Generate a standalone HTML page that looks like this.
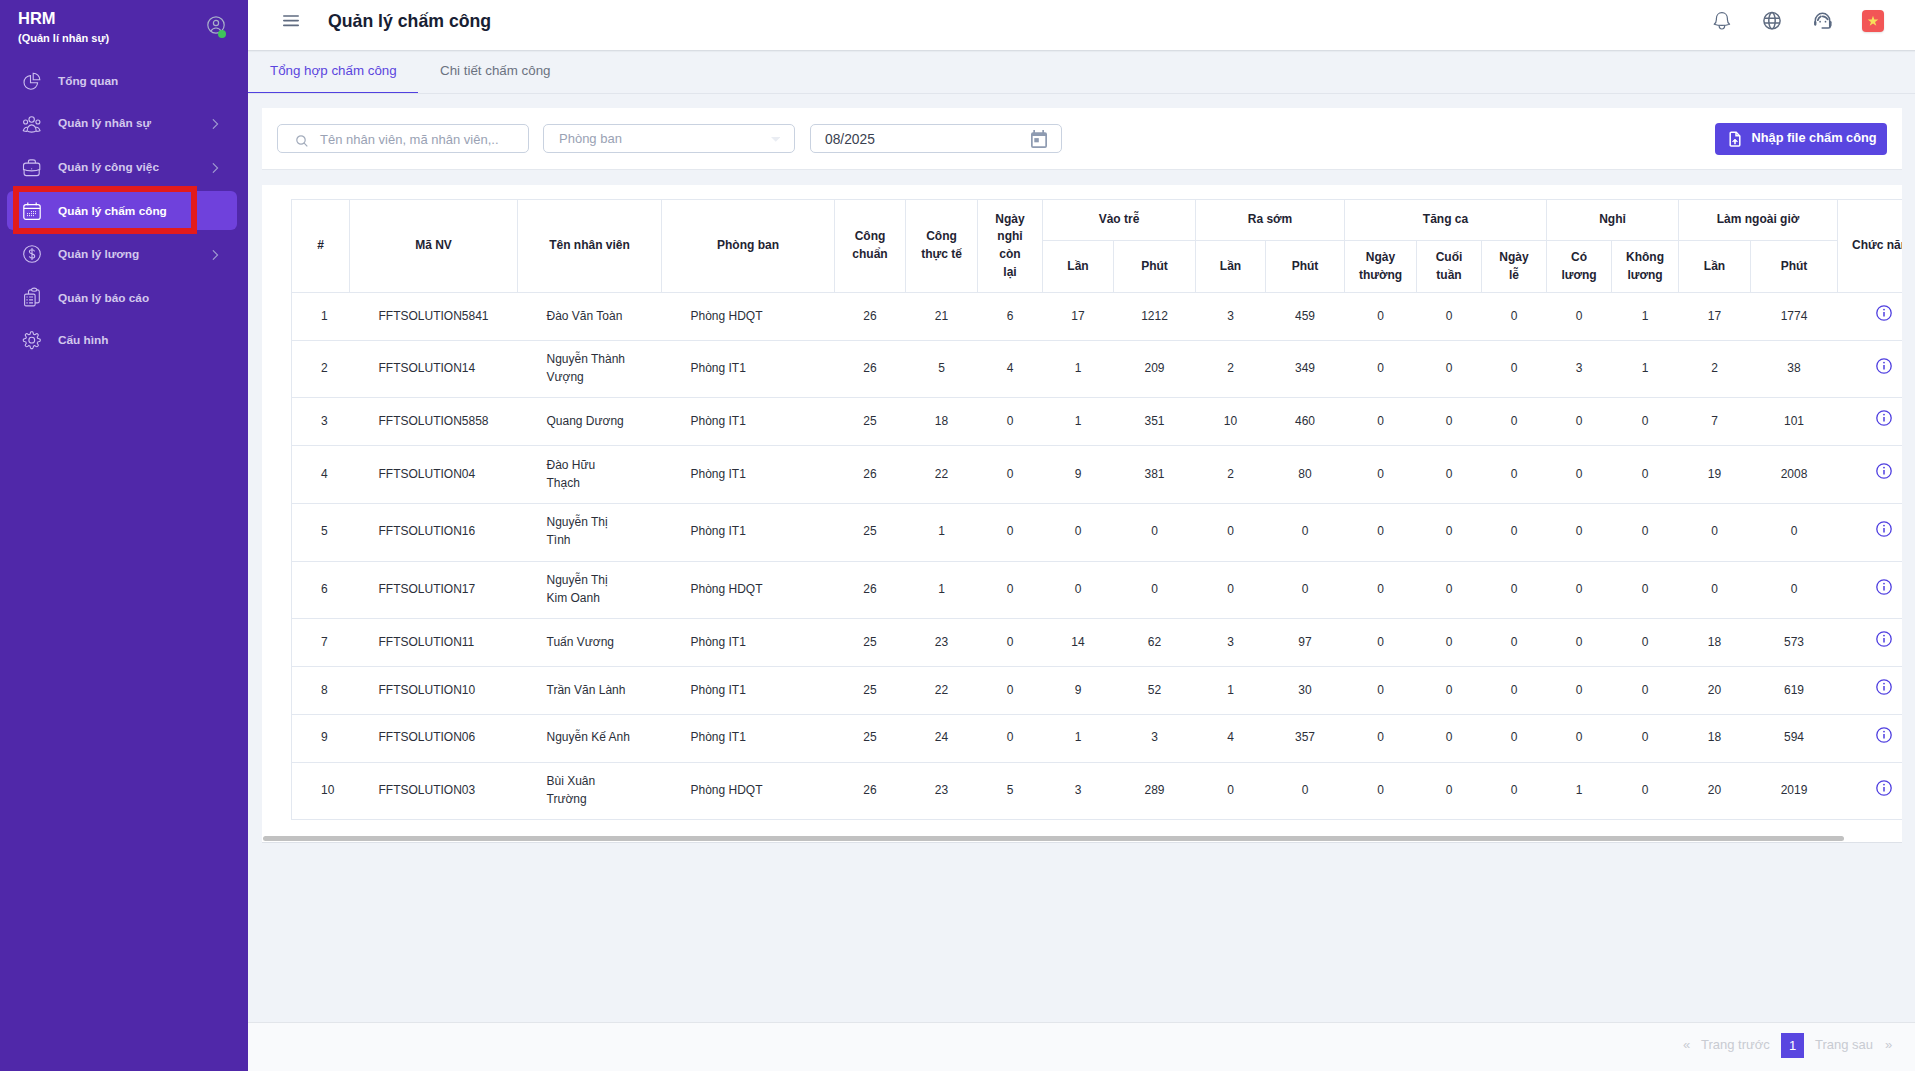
<!DOCTYPE html>
<html lang="vi">
<head>
<meta charset="utf-8">
<title>Quản lý chấm công</title>
<style>
*{box-sizing:border-box;margin:0;padding:0}
html,body{width:1915px;height:1071px;overflow:hidden}
body{font-family:"Liberation Sans",sans-serif;background:#f0f3f8;color:#1f2937;position:relative}
.abs{position:absolute}
/* sidebar */
#sb{position:absolute;left:0;top:0;width:248px;height:1071px;background:#5028a9}
#sb .brand{position:absolute;left:18px;top:9px;color:#fff;font-weight:bold;font-size:16.5px;line-height:18px}
#sb .brand2{position:absolute;left:18px;top:31px;color:#fff;font-weight:bold;font-size:11px;line-height:14px}
#sb .avatar{position:absolute;left:206.8px;top:15.8px;width:18px;height:18px}
#sb .dot{position:absolute;left:218px;top:30px;width:8px;height:8px;border-radius:50%;background:#3fc35a}
.item{position:absolute;left:7px;width:230px;height:39px;border-radius:6px}
.item.active{background:#6f41dc}
.item .ic{position:absolute;left:16px;top:10.5px;width:18px;height:18px}
.item .tx{position:absolute;left:51px;top:1px;line-height:39px;font-size:11.8px;font-weight:bold;color:#d3c8ed;white-space:nowrap}
.item.active .tx{color:#fff}
.item .chev{position:absolute;left:204px;top:16px;width:8px;height:10px}
#redbox{position:absolute;left:13px;top:186px;width:184px;height:48px;border:6px solid #e31b1b}
/* header */
#hdr{position:absolute;left:248px;top:0;width:1667px;height:51px;background:#fff;border-bottom:1px solid #d9dde3;box-shadow:0 1px 1px rgba(30,40,60,.04)}
#hdr .title{position:absolute;left:80px;top:9px;font-size:17.7px;font-weight:bold;color:#172033;line-height:24px;white-space:nowrap}
/* tabs */
.tab{position:absolute;top:61px;font-size:13.35px;line-height:20px;white-space:nowrap}
#tabline{position:absolute;left:248px;top:93px;width:1667px;height:1px;background:#e1e5ec}
#tabact{position:absolute;left:248px;top:92px;width:170px;height:1px;background:#5040e0}
/* filter card */
#fcard{position:absolute;left:262px;top:108px;width:1640px;height:62px;background:#fff;border-bottom:1px solid #e4e8ee}
.inp{position:absolute;top:124px;height:29px;border:1px solid #c9d2e0;border-radius:5px;background:#fff}
.ph{position:absolute;font-size:13px;line-height:16px;color:#9aa2b4;white-space:nowrap}
#btn{position:absolute;left:1715px;top:123px;width:172px;height:32px;background:#5946e0;border-radius:4px}
#btn .tx{position:absolute;left:36.5px;top:6px;color:#fff;font-weight:bold;font-size:12.8px;line-height:18px;white-space:nowrap}
/* table card */
#tcard{position:absolute;left:262px;top:185px;width:1640px;height:658px;background:#fff;overflow:hidden;border-bottom:1px solid #dde1e8}
#scroll{position:absolute;left:1px;top:651px;width:1581px;height:5px;border-radius:2.5px;background:#c1c1c1}
table{position:absolute;left:29px;top:14px;border-collapse:collapse;table-layout:fixed;width:1642px}
th,td{border:1px solid #e3e8f0;padding:0}
th{font-weight:bold;font-size:12px;line-height:17.6px;color:#1f2433;text-align:center;padding-bottom:0}
td{font-size:12px;line-height:18px;color:#2b2f3a;text-align:center;padding-bottom:2px}
td{border-left:none;border-right:none}
tr.up td{padding-bottom:4px}
tr.up td:last-child{padding-bottom:2px}
td:first-child{border-left:1px solid #e3e8f0}
td.l{text-align:left;padding-left:29px}
.info{display:inline-block;width:16px;height:16px;vertical-align:middle;position:relative;top:-3px;left:38px}
/* footer */
#foot{position:absolute;left:248px;top:1022px;width:1667px;height:49px;background:#f9fafc;border-top:1px solid #e2e5ea}
.pg{position:absolute;top:1036px;font-size:13px;line-height:18px;color:#c8cbd2;white-space:nowrap}
#pg1{position:absolute;left:1781px;top:1033px;width:23px;height:25px;background:#5946e0;color:#fff;font-size:13px;line-height:25px;text-align:center}
</style>
</head>
<body>

<div id="sb">
  <div class="brand">HRM</div>
  <div class="brand2">(Quản lí nhân sự)</div>
  <svg class="avatar" viewBox="0 0 18 18" fill="none" stroke="#a9b0ca" stroke-width="1.2"><circle cx="9" cy="9" r="8.2"/><circle cx="9" cy="7" r="2.6"/><path d="M3.8 15.2c1.2-2.2 3-3.2 5.2-3.2s4 1 5.2 3.2"/></svg>
  <div class="dot"></div>

  <div class="item" style="top:61px">
    <svg class="ic" viewBox="0 0 18 18" fill="none" stroke="#cdbff0" stroke-width="1.1"><path d="M7.5 3.6A6.8 6.8 0 1 0 14.6 10.7H7.5Z"/><path d="M10.2 1.2v6.6h6.6a6.6 6.6 0 0 0-6.6-6.6Z"/></svg>
    <div class="tx">Tổng quan</div>
  </div>
  <div class="item" style="top:103px">
    <svg class="ic" viewBox="0 0 18 18" fill="none" stroke="#cdbff0" stroke-width="1.1" style="overflow:visible"><circle cx="8.66" cy="5.5" r="2.7"/><circle cx="2.6" cy="8.05" r="2"/><circle cx="14.9" cy="8.05" r="2"/><path d="M4.1 16.9C4.1 13.5 6.1 10.9 8.66 10.9C11.2 10.9 13.2 13.5 13.2 16.9C11.4 18.5 5.9 18.5 4.1 16.9Z"/><path d="M4.7 13.3C2.7 13 0.9 14.7 0.3 16.7C1.5 17.3 2.8 17.4 4.1 17.4"/><path d="M12.6 13.3C14.6 13 16.4 14.7 17 16.7C15.8 17.3 14.5 17.4 13.2 17.4"/></svg>
    <div class="tx">Quản lý nhân sự</div>
    <svg class="chev" viewBox="0 0 8 10" fill="none" stroke="#a09cd0" stroke-width="1.1"><path d="M1.9 0.3L6.6 5L1.9 9.7"/></svg>
  </div>
  <div class="item" style="top:147px">
    <svg class="ic" viewBox="0 0 18 18" fill="none" stroke="#cdbff0" stroke-width="1.1" style="overflow:visible"><path d="M2.8 5.1H14.5C15.9 5.1 16.8 6 16.8 7.4V11.5L16.2 12.5V15.6C16.2 16.9 15.3 17.6 14 17.6H3.3C2 17.6 1.1 16.9 1.1 15.6V12.5L0.5 11.5V7.4C0.5 6 1.4 5.1 2.8 5.1Z"/><path d="M0.8 11.6C4 13.3 13.3 13.3 16.5 11.6"/><path d="M5.4 5V3.8C5.4 2.6 6.2 1.9 7.4 1.9H10C11.2 1.9 12.4 2.6 12.4 3.8V5"/><circle cx="8.66" cy="10.8" r=".6" fill="#cdbff0" stroke="none"/></svg>
    <div class="tx">Quản lý công việc</div>
    <svg class="chev" viewBox="0 0 8 10" fill="none" stroke="#a09cd0" stroke-width="1.1"><path d="M1.9 0.3L6.6 5L1.9 9.7"/></svg>
  </div>
  <div class="item active" style="top:191px">
    <svg class="ic" viewBox="0 0 18 18" fill="none" stroke="#fff" stroke-width="1.2"><path d="M4.8 0.6v2.6M13.2 0.6v2.6"/><rect x="0.8" y="2.6" width="16.4" height="14.8" rx="2.2"/><path d="M0.8 6.4h16.4"/><g fill="#fff" stroke="none"><circle cx="8.5" cy="9.6" r=".55"/><circle cx="10.5" cy="9.6" r=".55"/><circle cx="12.5" cy="9.6" r=".55"/><circle cx="4.5" cy="11.6" r=".55"/><circle cx="6.5" cy="11.6" r=".55"/><circle cx="8.5" cy="11.6" r=".55"/><circle cx="10.5" cy="11.6" r=".55"/><circle cx="12.5" cy="11.6" r=".55"/><circle cx="4.5" cy="13.6" r=".55"/><circle cx="6.5" cy="13.6" r=".55"/><circle cx="8.5" cy="13.6" r=".55"/><circle cx="10.5" cy="13.6" r=".55"/></g></svg>
    <div class="tx">Quản lý chấm công</div>
  </div>
  <div class="item" style="top:234px">
    <svg class="ic" viewBox="0 0 18 18" fill="none" stroke="#cdbff0" stroke-width="1.1"><circle cx="9" cy="9" r="8.3"/><path d="M11.6 6.4c-.4-1-1.4-1.6-2.6-1.6-1.5 0-2.6.8-2.6 2s1.1 1.7 2.6 2.1 2.7.9 2.7 2.1-1.2 2.1-2.7 2.1c-1.3 0-2.3-.6-2.7-1.7M9 3v12"/></svg>
    <div class="tx">Quản lý lương</div>
    <svg class="chev" viewBox="0 0 8 10" fill="none" stroke="#a09cd0" stroke-width="1.1"><path d="M1.9 0.3L6.6 5L1.9 9.7"/></svg>
  </div>
  <div class="item" style="top:278px">
    <svg class="ic" viewBox="0 0 18 18" fill="none" stroke="#cdbff0" stroke-width="1.1" style="overflow:visible"><rect x="1.6" y="5.1" width="10.5" height="11.8" rx="1.4"/><path d="M5.5 5.1V2.6C5.5 1.5 6.1 0.9 7.3 0.9H8.4M13.9 0.9H14.4C15.6 0.9 16.3 1.6 16.3 2.8V12.2C16.3 13.2 15.5 13.9 14.5 13.9H12.1"/><path d="M8.4 0.8C8.6 -0.3 9.7 -0.9 11.15 -0.9C12.6 -0.9 13.7 -0.3 13.9 0.8C13.7 1.8 12.6 2.3 11.15 2.3C9.7 2.3 8.6 1.8 8.4 0.8Z"/><path d="M3.4 8H4.7M6.1 8H10M3.4 10.9H4.7M6.1 10.9H10M3.4 13.8H4.7M6.1 13.8H10" stroke-width="1.2"/></svg>
    <div class="tx">Quản lý báo cáo</div>
  </div>
  <div class="item" style="top:320px">
    <svg class="ic" viewBox="0 0 18 18" fill="none" stroke="#cdbff0" stroke-width="1.1" style="overflow:visible"><circle cx="8.77" cy="9.17" r="2.9"/><path d="M17.22 9.17 L17.21 9.50 L17.19 9.83 L17.03 10.15 L16.51 10.40 L15.93 10.59 L15.35 10.75 L14.82 10.88 L14.62 11.07 L14.54 11.30 L14.45 11.52 L14.36 11.74 L14.25 11.96 L14.25 12.24 L14.54 12.71 L14.84 13.23 L15.11 13.77 L15.30 14.32 L15.20 14.66 L14.98 14.91 L14.75 15.15 L14.51 15.38 L14.26 15.60 L13.92 15.70 L13.37 15.51 L12.83 15.24 L12.31 14.94 L11.84 14.65 L11.56 14.65 L11.34 14.76 L11.12 14.85 L10.90 14.94 L10.67 15.02 L10.48 15.22 L10.35 15.75 L10.19 16.33 L10.00 16.91 L9.75 17.43 L9.43 17.59 L9.10 17.61 L8.77 17.62 L8.44 17.61 L8.11 17.59 L7.79 17.43 L7.54 16.91 L7.35 16.33 L7.19 15.75 L7.06 15.22 L6.87 15.02 L6.64 14.94 L6.42 14.85 L6.20 14.76 L5.98 14.65 L5.70 14.65 L5.23 14.94 L4.71 15.24 L4.17 15.51 L3.62 15.70 L3.28 15.60 L3.03 15.38 L2.79 15.15 L2.56 14.91 L2.34 14.66 L2.24 14.32 L2.43 13.77 L2.70 13.23 L3.00 12.71 L3.29 12.24 L3.29 11.96 L3.18 11.74 L3.09 11.52 L3.00 11.30 L2.92 11.07 L2.72 10.88 L2.19 10.75 L1.61 10.59 L1.03 10.40 L0.51 10.15 L0.35 9.83 L0.33 9.50 L0.32 9.17 L0.33 8.84 L0.35 8.51 L0.51 8.19 L1.03 7.94 L1.61 7.75 L2.19 7.59 L2.72 7.46 L2.92 7.27 L3.00 7.04 L3.09 6.82 L3.18 6.60 L3.29 6.38 L3.29 6.10 L3.00 5.63 L2.70 5.11 L2.43 4.57 L2.24 4.02 L2.34 3.68 L2.56 3.43 L2.79 3.19 L3.03 2.96 L3.28 2.74 L3.62 2.64 L4.17 2.83 L4.71 3.10 L5.23 3.40 L5.70 3.69 L5.98 3.69 L6.20 3.58 L6.42 3.49 L6.64 3.40 L6.87 3.32 L7.06 3.12 L7.19 2.59 L7.35 2.01 L7.54 1.43 L7.79 0.91 L8.11 0.75 L8.44 0.73 L8.77 0.72 L9.10 0.73 L9.43 0.75 L9.75 0.91 L10.00 1.43 L10.19 2.01 L10.35 2.59 L10.48 3.12 L10.67 3.32 L10.90 3.40 L11.12 3.49 L11.34 3.58 L11.56 3.69 L11.84 3.69 L12.31 3.40 L12.83 3.10 L13.37 2.83 L13.92 2.64 L14.26 2.74 L14.51 2.96 L14.75 3.19 L14.98 3.43 L15.20 3.68 L15.30 4.02 L15.11 4.57 L14.84 5.11 L14.54 5.63 L14.25 6.10 L14.25 6.38 L14.36 6.60 L14.45 6.82 L14.54 7.04 L14.62 7.27 L14.82 7.46 L15.35 7.59 L15.93 7.75 L16.51 7.94 L17.03 8.19 L17.19 8.51 L17.21 8.84Z"/></svg>
    <div class="tx">Cấu hình</div>
  </div>
  <div id="redbox"></div>
</div>

<div id="hdr">
  <svg class="abs" style="left:35px;top:14px" width="16" height="13" viewBox="0 0 16 13" fill="none" stroke="#5f6b80" stroke-width="1.6" stroke-linecap="round"><path d="M0.8 2h14.4M0.8 6.6h14.4M0.8 11.4h14.4"/></svg>
  <div class="title">Quản lý chấm công</div>
  <!-- bell -->
  <svg class="abs" style="left:1465px;top:11.8px;overflow:visible" width="18" height="20" viewBox="0 0 18 20" fill="none" stroke="#5b6a82" stroke-width="1.2" stroke-linejoin="round"><path d="M1.2 12.2C2.6 11.2 3.4 9.6 3.4 7.5V6.5C3.4 3.1 5.7 0.7 8.9 0.7C12.1 0.7 14.4 3.1 14.4 6.5V7.5C14.4 9.6 15.2 11.2 16.6 12.2C14.5 12.9 12 13.4 8.9 13.4C5.8 13.4 3.3 12.9 1.2 12.2Z"/><path d="M6.1 13.3C6.1 15.8 7.3 17 8.9 17C10.5 17 11.7 15.8 11.7 13.3"/></svg>
  <!-- globe -->
  <svg class="abs" style="left:1514px;top:11px;overflow:visible" width="20" height="20" viewBox="0 0 20 20" fill="none" stroke="#5e6b80" stroke-width="1.5"><circle cx="10" cy="9.7" r="8.1"/><ellipse cx="10" cy="9.7" rx="3.2" ry="8.1"/><path d="M2 7.3H18M2 11.9H18"/></svg>
  <!-- headset -->
  <svg class="abs" style="left:1565px;top:12px;overflow:visible" width="20" height="20" viewBox="0 0 20 20" fill="none" stroke="#5b6a82" stroke-width="1.5" stroke-linecap="round"><path d="M2.3 12.5V8.5A7.2 7.2 0 0 1 16.7 8.5V14.6"/><rect x="1.1" y="9.1" width="2.3" height="4.6" rx="1.1" fill="#5b6a82" stroke="none"/><rect x="16.3" y="9.1" width="2.3" height="5.3" rx="1.1" fill="#5b6a82" stroke="none"/><path d="M17.4 14.4C17.2 15.5 16.5 16 15.4 16H9.2" stroke-width="1.6"/><path d="M4.8 8.2C5.3 6.4 6.4 5 7.9 4.4" stroke-width="1.8"/><path d="M9.7 4.3C11.7 4.4 13.5 5.5 14.6 7.4" stroke-width="1.8"/><circle cx="7.1" cy="9.7" r=".85" fill="#5b6a82" stroke="none"/><circle cx="12.5" cy="9.7" r=".85" fill="#5b6a82" stroke="none"/></svg>
  <!-- flag -->
  <div class="abs" style="left:1614px;top:10px;width:22px;height:22px;border-radius:4px;background:#f25656;box-shadow:0 1px 2px rgba(0,0,0,.12)"></div>
  <svg class="abs" style="left:1618px;top:14px" width="14" height="14" viewBox="0 0 14 14"><path fill="#f6e05a" d="M7 1.8L8.3 5.6H12.3L9.05 7.95L10.3 11.8L7 9.45L3.7 11.8L4.95 7.95L1.7 5.6H5.7Z"/></svg>
</div>

<div class="tab" style="left:270px;color:#5b45de">Tổng hợp chấm công</div>
<div class="tab" style="left:440px;color:#6b7280">Chi tiết chấm công</div>
<div id="tabline"></div>
<div id="tabact"></div>

<div id="fcard"></div>
<div class="inp" style="left:277px;width:252px"></div>
<svg class="abs" style="left:295.5px;top:134.5px" width="12" height="12" viewBox="0 0 12 12" fill="none" stroke="#a2abbb" stroke-width="1.2"><circle cx="5" cy="5" r="4.2"/><path d="M8.2 8.2L11.3 11.3"/></svg>
<div class="ph" style="left:320px;top:131.6px">Tên nhân viên, mã nhân viên,..</div>
<div class="inp" style="left:543px;width:252px"></div>
<div class="ph" style="left:559px;top:131px">Phòng ban</div>
<svg class="abs" style="left:770.5px;top:137px" width="9.5" height="5" viewBox="0 0 9.5 5"><path d="M0 0h9.5L4.75 4.8Z" fill="#eaedf3"/></svg>
<div class="inp" style="left:810px;width:252px"></div>
<div class="ph" style="left:825px;top:132px;color:#3a4150;font-size:13.8px">08/2025</div>
<svg class="abs" style="left:1031px;top:130px" width="16" height="18" viewBox="0 0 16 18"><path fill="#8e9bb1" fill-rule="evenodd" d="M2.3 0H4V2.2H11.3V0H13V2.2H14A2 2 0 0 1 16 4.2V16A2 2 0 0 1 14 18H2A2 2 0 0 1 0 16V4.2A2 2 0 0 1 2 2.2H2.3Z M1.7 5.9V16.2H14.3V5.9Z"/><rect x="3.3" y="8.1" width="4.5" height="4.2" fill="#8e9bb1"/></svg>

<div id="btn">
  <svg class="abs" style="left:14px;top:8px" width="12" height="16" viewBox="0 0 12 16" fill="none" stroke="#fff" stroke-width="1.5"><path d="M1.2 2.2c0-.6.4-1 1-1h5l3.6 3.8v9c0 .6-.4 1-1 1H2.2c-.6 0-1-.4-1-1Z"/><path d="M7 1.4v3.4h3.6" /><path d="M6 13.2V9.4" stroke-width="1.6"/><path d="M3.4 10.6L6 8l2.6 2.6Z" fill="#fff" stroke-width=".6"/></svg>
  <div class="tx">Nhập file chấm công</div>
</div>

<div id="tcard">
  <table id="tbl">
    <colgroup>
      <col style="width:58px"><col style="width:168px"><col style="width:144px"><col style="width:173px">
      <col style="width:71px"><col style="width:72px"><col style="width:65px">
      <col style="width:71px"><col style="width:82px"><col style="width:70px"><col style="width:79px">
      <col style="width:72px"><col style="width:65px"><col style="width:65px">
      <col style="width:65px"><col style="width:67px">
      <col style="width:72px"><col style="width:87px">
      <col style="width:96px">
    </colgroup>
    <thead>
      <tr style="height:41px">
        <th rowspan="2">#</th><th rowspan="2">Mã NV</th><th rowspan="2">Tên nhân viên</th><th rowspan="2">Phòng ban</th>
        <th rowspan="2">Công<br>chuẩn</th><th rowspan="2">Công<br>thực tế</th><th rowspan="2">Ngày<br>nghỉ<br>còn<br>lại</th>
        <th colspan="2">Vào trễ</th><th colspan="2">Ra sớm</th><th colspan="3">Tăng ca</th><th colspan="2">Nghỉ</th><th colspan="2">Làm ngoài giờ</th>
        <th rowspan="2" style="text-align:left;padding-left:14px">Chức năng</th>
      </tr>
      <tr style="height:52px">
        <th>Lần</th><th>Phút</th><th>Lần</th><th>Phút</th><th>Ngày<br>thường</th><th>Cuối<br>tuần</th><th>Ngày<br>lễ</th><th>Có<br>lương</th><th>Không<br>lương</th><th>Lần</th><th>Phút</th>
      </tr>
    </thead>
    <tbody id="tb">
      <tr style="height:48px"><td class="l">1</td><td class="l">FFTSOLUTION5841</td><td class="l">Đào Văn Toàn</td><td class="l">Phòng HDQT</td><td>26</td><td>21</td><td>6</td><td>17</td><td>1212</td><td>3</td><td>459</td><td>0</td><td>0</td><td>0</td><td>0</td><td>1</td><td>17</td><td>1774</td><td class="l" style="padding-left:0"><svg class="info" viewBox="0 0 16 16" fill="none" stroke="#4f3fe0" stroke-width="1.3"><circle cx="8" cy="8" r="7.2"/><path d="M8 7v4.6" stroke-width="1.5"/><circle cx="8" cy="4.6" r=".9" fill="#4f3fe0" stroke="none"/></svg></td></tr>
      <tr style="height:57px"><td class="l">2</td><td class="l">FFTSOLUTION14</td><td class="l">Nguyễn Thành<br>Vượng</td><td class="l">Phòng IT1</td><td>26</td><td>5</td><td>4</td><td>1</td><td>209</td><td>2</td><td>349</td><td>0</td><td>0</td><td>0</td><td>3</td><td>1</td><td>2</td><td>38</td><td class="l" style="padding-left:0"><svg class="info" viewBox="0 0 16 16" fill="none" stroke="#4f3fe0" stroke-width="1.3"><circle cx="8" cy="8" r="7.2"/><path d="M8 7v4.6" stroke-width="1.5"/><circle cx="8" cy="4.6" r=".9" fill="#4f3fe0" stroke="none"/></svg></td></tr>
      <tr style="height:48px"><td class="l">3</td><td class="l">FFTSOLUTION5858</td><td class="l">Quang Dương</td><td class="l">Phòng IT1</td><td>25</td><td>18</td><td>0</td><td>1</td><td>351</td><td>10</td><td>460</td><td>0</td><td>0</td><td>0</td><td>0</td><td>0</td><td>7</td><td>101</td><td class="l" style="padding-left:0"><svg class="info" viewBox="0 0 16 16" fill="none" stroke="#4f3fe0" stroke-width="1.3"><circle cx="8" cy="8" r="7.2"/><path d="M8 7v4.6" stroke-width="1.5"/><circle cx="8" cy="4.6" r=".9" fill="#4f3fe0" stroke="none"/></svg></td></tr>
      <tr style="height:58px"><td class="l">4</td><td class="l">FFTSOLUTION04</td><td class="l">Đào Hữu<br>Thạch</td><td class="l">Phòng IT1</td><td>26</td><td>22</td><td>0</td><td>9</td><td>381</td><td>2</td><td>80</td><td>0</td><td>0</td><td>0</td><td>0</td><td>0</td><td>19</td><td>2008</td><td class="l" style="padding-left:0"><svg class="info" viewBox="0 0 16 16" fill="none" stroke="#4f3fe0" stroke-width="1.3"><circle cx="8" cy="8" r="7.2"/><path d="M8 7v4.6" stroke-width="1.5"/><circle cx="8" cy="4.6" r=".9" fill="#4f3fe0" stroke="none"/></svg></td></tr>
      <tr style="height:58px" class="up"><td class="l">5</td><td class="l">FFTSOLUTION16</td><td class="l">Nguyễn Thị<br>Tình</td><td class="l">Phòng IT1</td><td>25</td><td>1</td><td>0</td><td>0</td><td>0</td><td>0</td><td>0</td><td>0</td><td>0</td><td>0</td><td>0</td><td>0</td><td>0</td><td>0</td><td class="l" style="padding-left:0"><svg class="info" viewBox="0 0 16 16" fill="none" stroke="#4f3fe0" stroke-width="1.3"><circle cx="8" cy="8" r="7.2"/><path d="M8 7v4.6" stroke-width="1.5"/><circle cx="8" cy="4.6" r=".9" fill="#4f3fe0" stroke="none"/></svg></td></tr>
      <tr style="height:57px"><td class="l">6</td><td class="l">FFTSOLUTION17</td><td class="l">Nguyễn Thị<br>Kim Oanh</td><td class="l">Phòng HDQT</td><td>26</td><td>1</td><td>0</td><td>0</td><td>0</td><td>0</td><td>0</td><td>0</td><td>0</td><td>0</td><td>0</td><td>0</td><td>0</td><td>0</td><td class="l" style="padding-left:0"><svg class="info" viewBox="0 0 16 16" fill="none" stroke="#4f3fe0" stroke-width="1.3"><circle cx="8" cy="8" r="7.2"/><path d="M8 7v4.6" stroke-width="1.5"/><circle cx="8" cy="4.6" r=".9" fill="#4f3fe0" stroke="none"/></svg></td></tr>
      <tr style="height:48px"><td class="l">7</td><td class="l">FFTSOLUTION11</td><td class="l">Tuấn Vương</td><td class="l">Phòng IT1</td><td>25</td><td>23</td><td>0</td><td>14</td><td>62</td><td>3</td><td>97</td><td>0</td><td>0</td><td>0</td><td>0</td><td>0</td><td>18</td><td>573</td><td class="l" style="padding-left:0"><svg class="info" viewBox="0 0 16 16" fill="none" stroke="#4f3fe0" stroke-width="1.3"><circle cx="8" cy="8" r="7.2"/><path d="M8 7v4.6" stroke-width="1.5"/><circle cx="8" cy="4.6" r=".9" fill="#4f3fe0" stroke="none"/></svg></td></tr>
      <tr style="height:48px"><td class="l">8</td><td class="l">FFTSOLUTION10</td><td class="l">Trần Văn Lành</td><td class="l">Phòng IT1</td><td>25</td><td>22</td><td>0</td><td>9</td><td>52</td><td>1</td><td>30</td><td>0</td><td>0</td><td>0</td><td>0</td><td>0</td><td>20</td><td>619</td><td class="l" style="padding-left:0"><svg class="info" viewBox="0 0 16 16" fill="none" stroke="#4f3fe0" stroke-width="1.3"><circle cx="8" cy="8" r="7.2"/><path d="M8 7v4.6" stroke-width="1.5"/><circle cx="8" cy="4.6" r=".9" fill="#4f3fe0" stroke="none"/></svg></td></tr>
      <tr style="height:48px" class="up"><td class="l">9</td><td class="l">FFTSOLUTION06</td><td class="l">Nguyễn Kế Anh</td><td class="l">Phòng IT1</td><td>25</td><td>24</td><td>0</td><td>1</td><td>3</td><td>4</td><td>357</td><td>0</td><td>0</td><td>0</td><td>0</td><td>0</td><td>18</td><td>594</td><td class="l" style="padding-left:0"><svg class="info" viewBox="0 0 16 16" fill="none" stroke="#4f3fe0" stroke-width="1.3"><circle cx="8" cy="8" r="7.2"/><path d="M8 7v4.6" stroke-width="1.5"/><circle cx="8" cy="4.6" r=".9" fill="#4f3fe0" stroke="none"/></svg></td></tr>
      <tr style="height:57px"><td class="l">10</td><td class="l">FFTSOLUTION03</td><td class="l">Bùi Xuân<br>Trường</td><td class="l">Phòng HDQT</td><td>26</td><td>23</td><td>5</td><td>3</td><td>289</td><td>0</td><td>0</td><td>0</td><td>0</td><td>0</td><td>1</td><td>0</td><td>20</td><td>2019</td><td class="l" style="padding-left:0"><svg class="info" viewBox="0 0 16 16" fill="none" stroke="#4f3fe0" stroke-width="1.3"><circle cx="8" cy="8" r="7.2"/><path d="M8 7v4.6" stroke-width="1.5"/><circle cx="8" cy="4.6" r=".9" fill="#4f3fe0" stroke="none"/></svg></td></tr>
    </tbody>
  </table>
  <div id="scroll"></div>
</div>

<div id="foot"></div>
<div class="pg" style="left:1683px">«</div>
<div class="pg" style="left:1701px">Trang trước</div>
<div id="pg1">1</div>
<div class="pg" style="left:1815px">Trang sau</div>
<div class="pg" style="left:1885px">»</div>

</body>
</html>
